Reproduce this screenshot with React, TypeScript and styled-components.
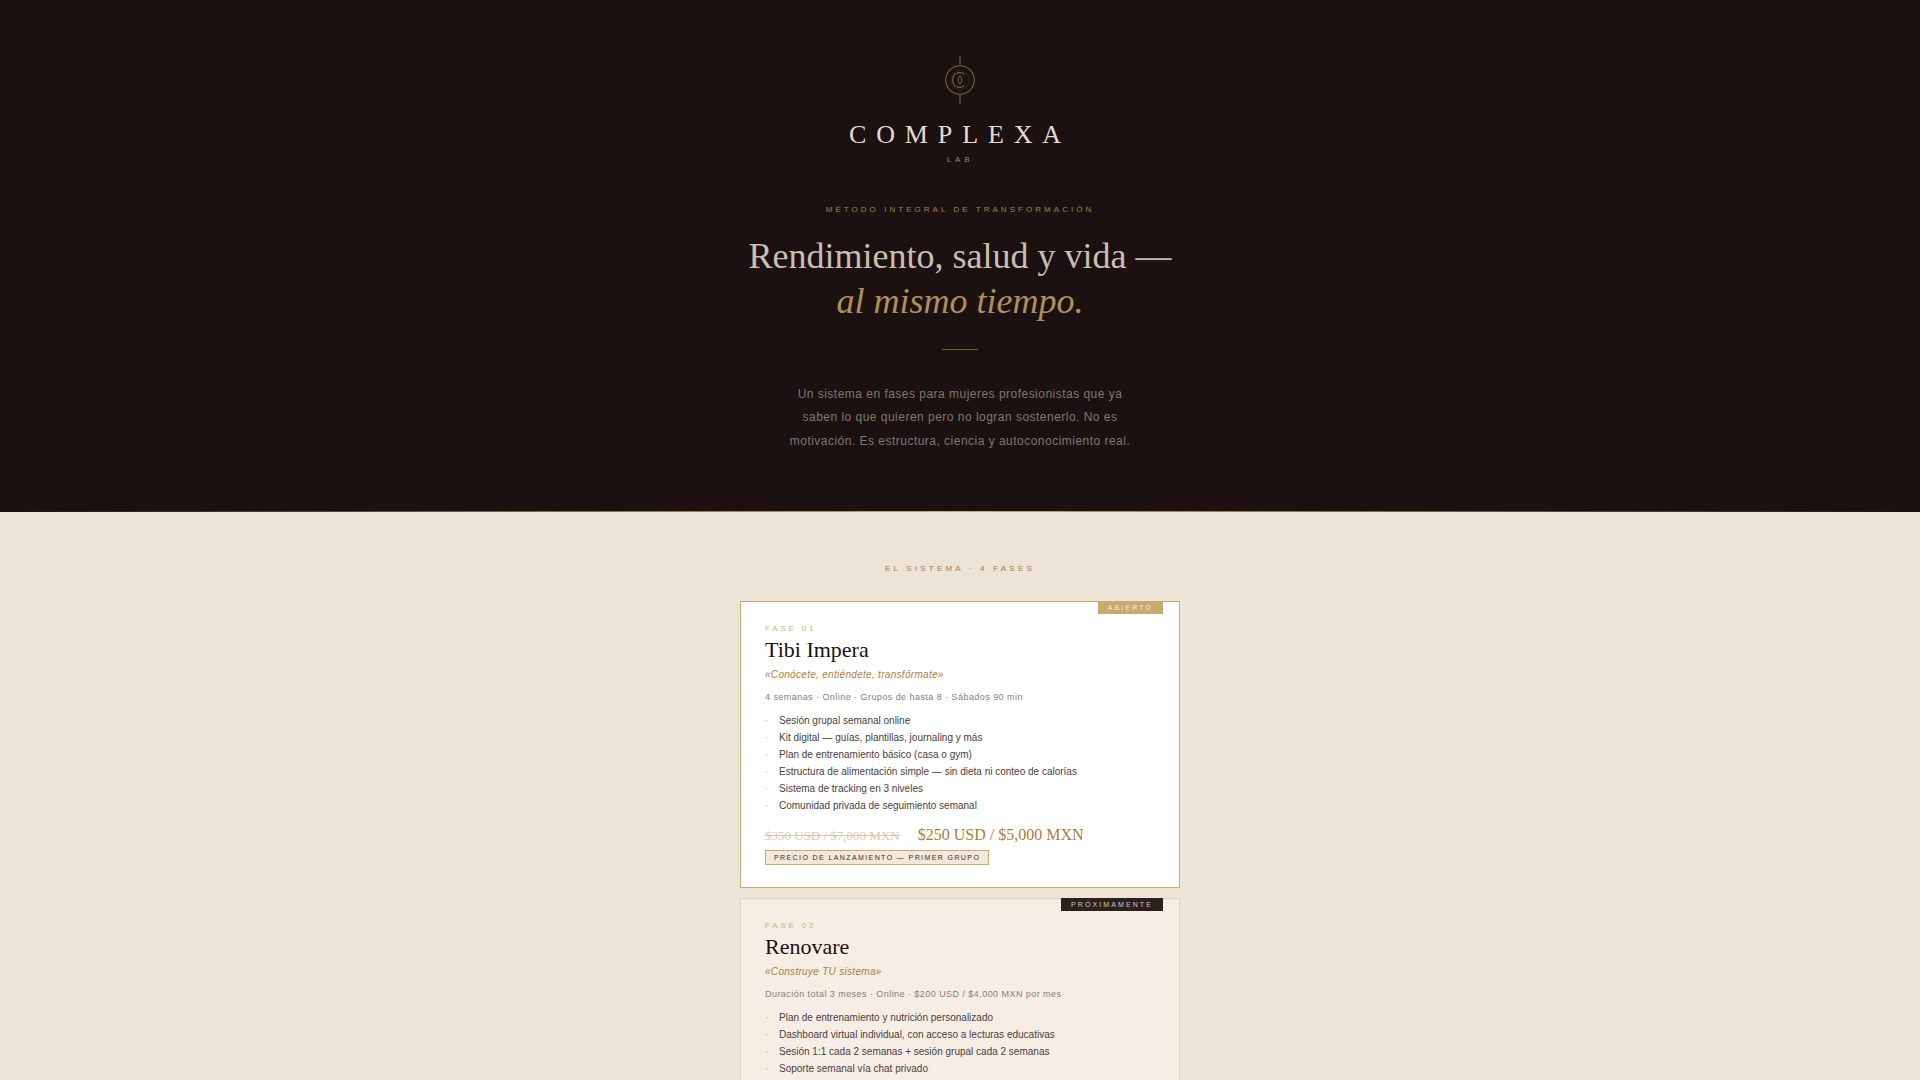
import React from "react";
import styled, { createGlobalStyle } from "styled-components";

const sans = `"Liberation Sans", Arial, sans-serif`;
const serif = `"Liberation Serif", "Times New Roman", serif`;

const GlobalStyle = createGlobalStyle`
  *, *::before, *::after { box-sizing: border-box; }
  body {
    margin: 0;
    background: #ede3d7;
    color: #1a1110;
    font-family: ${sans};
  }
  h1, h2, h3, p, ul { margin: 0; padding: 0; font-weight: 400; }
`;

const Hero = styled.header`
  display: flex;
  flex-direction: column;
  align-items: center;
  padding: 56px 24px 58px;
  background: #1a1110;
  text-align: center;
`;

const HeroRule = styled.div`
  height: 1px;
  background: linear-gradient(90deg, #1a1110, #c9a96e, #1a1110);
`;

const Emblem = styled.svg`
  display: block;
  width: 48px;
  height: 48px;
  margin-bottom: 16px;
`;

const Wordmark = styled.div`
  font: 26px/30px ${serif};
  letter-spacing: 0.38em;
  color: #e6dccf;
`;

const Label = styled.p<{ $color: string; $spacing: string }>`
  font-size: 8px;
  line-height: 9px;
  letter-spacing: ${(p) => p.$spacing};
  text-transform: uppercase;
  color: ${(p) => p.$color};
`;

const Brand = styled.div`
  display: flex;
  flex-direction: column;
  align-items: center;
  gap: 5px;
  margin-bottom: 41px;
`;

const Headline = styled.h1`
  margin-top: 20px;
  font: 36px/45px ${serif};
  color: #c9beb1;

  em {
    display: block;
    color: #ad905b;
  }
`;

const Divider = styled.div`
  width: 36px;
  height: 1px;
  margin: 25px 0 33px;
  background: #73603f;
`;

const Intro = styled.p`
  max-width: 360px;
  font-size: 12px;
  line-height: 1.95;
  letter-spacing: 0.04em;
  color: #81786f;
`;

const Phases = styled.main`
  display: flex;
  flex-direction: column;
  align-items: center;
  width: 100%;
  max-width: 480px;
  margin: 0 auto;
  padding: 52px 20px 0;
`;

const CardList = styled.div`
  display: flex;
  flex-direction: column;
  gap: 10px;
  width: 100%;
  margin-top: 28px;
`;

const Card = styled.article<{ $open?: boolean }>`
  position: relative;
  padding: 22px 24px;
  border: 1px solid ${(p) => (p.$open ? "#c9a96e" : "#dcd3c7")};
  background: ${(p) => (p.$open ? "#ffffff" : "#f6eee4")};
`;

const Status = styled.span<{ $open?: boolean }>`
  position: absolute;
  top: -1px;
  right: 16px;
  padding: 3px 10px 2px;
  font-size: 7px;
  line-height: 8px;
  letter-spacing: 0.3em;
  text-transform: uppercase;
  color: ${(p) => (p.$open ? "#f5ede2" : "#d3c6b4")};
  background: ${(p) => (p.$open ? "#c9a96e" : "#2a211f")};
`;

const Title = styled.h2`
  margin-top: 4px;
  font: 22px/25px ${serif};
  color: #1a1110;
`;

const Motto = styled.p`
  margin-top: 7px;
  font-size: 10px;
  font-style: italic;
  line-height: 11px;
  letter-spacing: 0.03em;
  color: #a8803f;
`;

const Meta = styled.p`
  margin-top: 12px;
  font-size: 9px;
  line-height: 10px;
  letter-spacing: 0.05em;
  color: #85807b;
`;

const Features = styled.ul`
  margin-top: 10px;
  list-style: none;
`;

const Feature = styled.li`
  display: flex;
  font-size: 10px;
  line-height: 17px;
  color: #4a403d;

  &::before {
    content: "·";
    flex: none;
    width: 14px;
    color: #c9a96e;
  }
`;

const Prices = styled.p`
  display: flex;
  align-items: baseline;
  gap: 18px;
  margin-top: 12px;
  font: 16px/18px ${serif};
  color: #a87d40;

  s {
    font-size: 13px;
    color: #dac8ab;
  }
`;

const Launch = styled.span`
  display: block;
  width: fit-content;
  margin-top: 5px;
  padding: 3px 8px;
  border: 1px solid #c9a96e;
  background: #f3e8da;
  font-size: 7px;
  line-height: 7px;
  letter-spacing: 0.2em;
  text-transform: uppercase;
  color: #3a302d;
`;

type Phase = {
  number: string;
  title: string;
  motto: string;
  meta: string;
  status: string;
  open?: boolean;
  features: string[];
  price?: { before: string; now: string; note: string };
};

const phases: Phase[] = [
  {
    number: "Fase 01",
    title: "Tibi Impera",
    motto: "«Conócete, entiéndete, transfórmate»",
    meta: "4 semanas · Online · Grupos de hasta 8 · Sábados 90 min",
    status: "Abierto",
    open: true,
    features: [
      "Sesión grupal semanal online",
      "Kit digital — guías, plantillas, journaling y más",
      "Plan de entrenamiento básico (casa o gym)",
      "Estructura de alimentación simple — sin dieta ni conteo de calorías",
      "Sistema de tracking en 3 niveles",
      "Comunidad privada de seguimiento semanal",
    ],
    price: {
      before: "$350 USD / $7,000 MXN",
      now: "$250 USD / $5,000 MXN",
      note: "Precio de lanzamiento — Primer grupo",
    },
  },
  {
    number: "Fase 02",
    title: "Renovare",
    motto: "«Construye TU sistema»",
    meta: "Duración total 3 meses · Online · $200 USD / $4,000 MXN por mes",
    status: "Próximamente",
    features: [
      "Plan de entrenamiento y nutrición personalizado",
      "Dashboard virtual individual, con acceso a lecturas educativas",
      "Sesión 1:1 cada 2 semanas + sesión grupal cada 2 semanas",
      "Soporte semanal vía chat privado",
    ],
  },
];

function Logo() {
  return (
    <Emblem viewBox="0 0 48 48" fill="none" stroke="#c9a96e" aria-hidden="true">
      <path d="M24 0v8.5M24 39v9.5" strokeWidth="2" opacity="0.3" />
      <circle cx="24" cy="24" r="14.3" strokeWidth="1.1" opacity="0.52" />
      <circle cx="24" cy="24" r="9.5" strokeWidth="0.8" opacity="0.16" />
      <path d="M28.5 18.2C23 14.6 16.6 18 16.6 24S23 33.4 28.5 29.8" strokeWidth="1.2" opacity="0.5" />
      <path d="M24 19.6Q27.4 24 24 28.4Q20.6 24 24 19.6Z" strokeWidth="1" opacity="0.5" />
    </Emblem>
  );
}

export default function App() {
  return (
    <>
      <GlobalStyle />
      <Hero>
        <Logo />
        <Brand>
          <Wordmark>COMPLEXA</Wordmark>
          <Label $color="#a68a55" $spacing="0.48em">Lab</Label>
        </Brand>
        <Label $color="#9d8352" $spacing="0.38em">Método integral de transformación</Label>
        <Headline>
          Rendimiento, salud y vida —<em>al mismo tiempo.</em>
        </Headline>
        <Divider />
        <Intro>
          Un sistema en fases para mujeres profesionistas que ya saben lo que
          quieren pero no logran sostenerlo. No es motivación. Es estructura,
          ciencia y autoconocimiento real.
        </Intro>
      </Hero>
      <HeroRule />
      <Phases>
        <Label $color="#a87d40" $spacing="0.4em">El sistema · 4 fases</Label>
        <CardList>
          {phases.map((phase) => (
            <Card key={phase.number} $open={phase.open}>
              <Status $open={phase.open}>{phase.status}</Status>
              <Label $color="#cfb27a" $spacing="0.35em">{phase.number}</Label>
              <Title>{phase.title}</Title>
              <Motto>{phase.motto}</Motto>
              <Meta>{phase.meta}</Meta>
              <Features>
                {phase.features.map((feature) => (
                  <Feature key={feature}>{feature}</Feature>
                ))}
              </Features>
              {phase.price && (
                <>
                  <Prices>
                    <s>{phase.price.before}</s>
                    <span>{phase.price.now}</span>
                  </Prices>
                  <Launch>{phase.price.note}</Launch>
                </>
              )}
            </Card>
          ))}
        </CardList>
      </Phases>
    </>
  );
}
